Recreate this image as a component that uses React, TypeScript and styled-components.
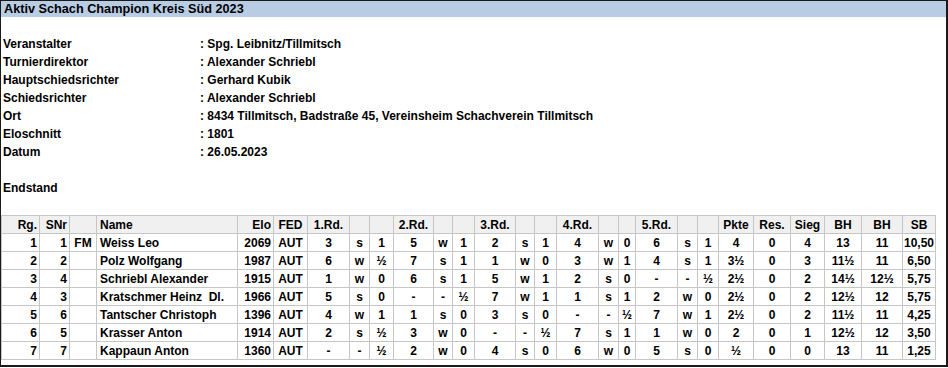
import React from "react";
import styled, { createGlobalStyle } from "styled-components";

const GlobalStyle = createGlobalStyle`
  html, body {
    margin: 0;
    padding: 0;
    background: #ffffff;
  }
  body {
    font-family: "Liberation Sans", Arial, sans-serif;
    font-size: 12px;
    font-weight: bold;
    color: #000;
  }
`;

const Frame = styled.div`
  box-sizing: border-box;
  width: 948px;
  height: 367px;
  border-top: 1px solid #1a1a1a;
  border-left: 1px solid #1a1a1a;
  border-right: 2px solid #1a1a1a;
  border-bottom: 2px solid #1a1a1a;
  display: flex;
  flex-direction: column;
`;

const TitleBar = styled.div`
  height: 16px;
  line-height: 16px;
  background: #b8cce4;
  padding-left: 3px;
  font-size: 12.7px;
  white-space: nowrap;
`;

const InfoGrid = styled.div`
  display: grid;
  grid-template-columns: 197px 1fr;
  grid-auto-rows: 18px;
  align-items: center;
  padding: 18px 0 0 2px;
`;

const InfoLabel = styled.div`
  white-space: nowrap;
`;

const InfoValue = styled.div`
  white-space: nowrap;
`;

const SectionTitle = styled.div`
  height: 18px;
  line-height: 18px;
  margin-top: 18px;
  margin-bottom: 18px;
  padding-left: 2px;
`;

const StandingsTable = styled.table`
  border-collapse: collapse;
  table-layout: fixed;
  width: 934px;
  font-size: 12px;
`;

type Align = "left" | "right" | "center";

const pad = (a?: Align) =>
  a === "left" ? "0 1px 0 3px" : a === "right" ? "0 2px 0 1px" : "0";

const HeadCell = styled.th<{ $align?: Align }>`
  height: 17px;
  padding: ${(p) => pad(p.$align)};
  border: 1px solid #c6c6c6;
  background: #f0f0f0;
  font-weight: bold;
  text-align: ${(p) => p.$align ?? "center"};
  white-space: pre;
  overflow: hidden;
  line-height: 16px;
`;

const Cell = styled.td<{ $align?: Align }>`
  height: 17px;
  padding: ${(p) => pad(p.$align)};
  border: 1px solid #c6c6c6;
  background: #ffffff;
  text-align: ${(p) => p.$align ?? "center"};
  white-space: pre;
  overflow: hidden;
  line-height: 16px;
`;

const info: [string, string][] = [
  ["Veranstalter", ": Spg. Leibnitz/Tillmitsch"],
  ["Turnierdirektor", ": Alexander Schriebl"],
  ["Hauptschiedsrichter", ": Gerhard Kubik"],
  ["Schiedsrichter", ": Alexander Schriebl"],
  ["Ort", ": 8434 Tillmitsch, Badstraße 45, Vereinsheim Schachverein Tillmitsch"],
  ["Eloschnitt", ": 1801"],
  ["Datum", ": 26.05.2023"],
];

const widths = [38, 30, 27, 141, 36, 34, 42, 20, 24, 40, 19, 22, 41, 19, 22, 42, 20, 17, 42, 20, 21, 35, 37, 34, 37, 41, 33];

const headers: [string, Align][] = [
  ["Rg.", "right"],
  ["SNr", "right"],
  ["", "center"],
  ["Name", "left"],
  ["Elo", "right"],
  ["FED", "center"],
  ["1.Rd.", "center"], ["", "center"], ["", "center"],
  ["2.Rd.", "center"], ["", "center"], ["", "center"],
  ["3.Rd.", "center"], ["", "center"], ["", "center"],
  ["4.Rd.", "center"], ["", "center"], ["", "center"],
  ["5.Rd.", "center"], ["", "center"], ["", "center"],
  ["Pkte", "center"],
  ["Res.", "center"],
  ["Sieg", "center"],
  ["BH", "center"],
  ["BH", "center"],
  ["SB", "center"],
];

const aligns: Align[] = headers.map((h) => h[1]);

const rows: string[][] = [
  ["1", "1", "FM", "Weiss Leo", "2069", "AUT", "3", "s", "1", "5", "w", "1", "2", "s", "1", "4", "w", "0", "6", "s", "1", "4", "0", "4", "13", "11", "10,50"],
  ["2", "2", "", "Polz Wolfgang", "1987", "AUT", "6", "w", "½", "7", "s", "1", "1", "w", "0", "3", "w", "1", "4", "s", "1", "3½", "0", "3", "11½", "11", "6,50"],
  ["3", "4", "", "Schriebl Alexander", "1915", "AUT", "1", "w", "0", "6", "s", "1", "5", "w", "1", "2", "s", "0", "-", "-", "½", "2½", "0", "2", "14½", "12½", "5,75"],
  ["4", "3", "", "Kratschmer Heinz  Dl.", "1966", "AUT", "5", "s", "0", "-", "-", "½", "7", "w", "1", "1", "s", "1", "2", "w", "0", "2½", "0", "2", "12½", "12", "5,75"],
  ["5", "6", "", "Tantscher Christoph", "1396", "AUT", "4", "w", "1", "1", "s", "0", "3", "s", "0", "-", "-", "½", "7", "w", "1", "2½", "0", "2", "11½", "11", "4,25"],
  ["6", "5", "", "Krasser Anton", "1914", "AUT", "2", "s", "½", "3", "w", "0", "-", "-", "½", "7", "s", "1", "1", "w", "0", "2", "0", "1", "12½", "12", "3,50"],
  ["7", "7", "", "Kappaun Anton", "1360", "AUT", "-", "-", "½", "2", "w", "0", "4", "s", "0", "6", "w", "0", "5", "s", "0", "½", "0", "0", "13", "11", "1,25"],
];

export default function App() {
  return (
    <>
      <GlobalStyle />
      <Frame>
        <TitleBar>Aktiv Schach Champion Kreis Süd 2023</TitleBar>
        <InfoGrid>
          {info.map(([label, value]) => (
            <React.Fragment key={label}>
              <InfoLabel>{label}</InfoLabel>
              <InfoValue>{value}</InfoValue>
            </React.Fragment>
          ))}
        </InfoGrid>
        <SectionTitle>Endstand</SectionTitle>
        <StandingsTable>
          <colgroup>
            {widths.map((w, i) => (
              <col key={i} style={{ width: w }} />
            ))}
          </colgroup>
          <thead>
            <tr>
              {headers.map(([h, a], i) => (
                <HeadCell key={i} $align={a}>
                  {h}
                </HeadCell>
              ))}
            </tr>
          </thead>
          <tbody>
            {rows.map((r, ri) => (
              <tr key={ri}>
                {r.map((v, ci) => (
                  <Cell key={ci} $align={aligns[ci]}>
                    {v}
                  </Cell>
                ))}
              </tr>
            ))}
          </tbody>
        </StandingsTable>
      </Frame>
    </>
  );
}
